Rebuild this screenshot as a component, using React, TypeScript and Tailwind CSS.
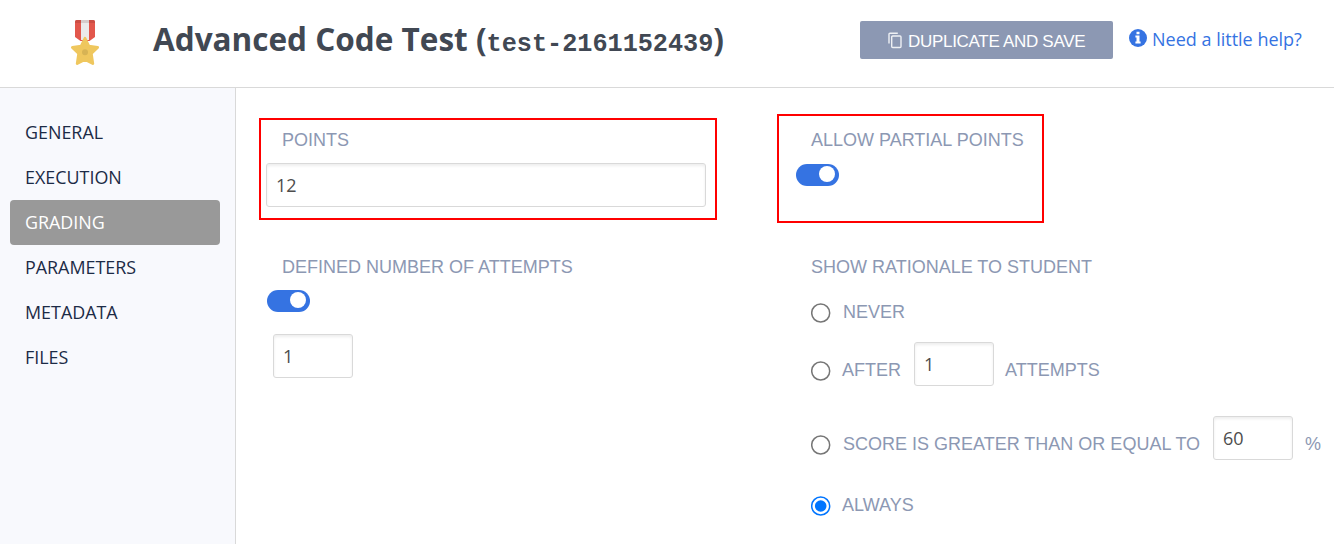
import type { ReactNode } from "react";

const label = "whitespace-nowrap font-['Liberation_Sans',sans-serif] text-[18px] leading-[22px] text-[#8c98b3]";
const field =
  "block h-[44px] shrink-0 rounded-[3px] border border-[#d9d9d9] bg-white px-[9px] pb-[1px] font-['Open_Sans',sans-serif] text-[18px] text-[#4d4d4d] shadow-[inset_0_2px_3px_rgba(0,0,0,0.07)] outline-none";

function Medal() {
  return (
    <svg width="28" height="46" viewBox="0 0 28 46" className="block shrink-0">
      <path d="M4 2Q4 0 6 0H22Q24 0 24 2V17L18.5 21H9.5L4 17Z" fill="#e2574c" />
      <path d="M6 0h4v3H4V2Q4 0 6 0ZM18 0h4q2 0 2 2v1h-6Z" fill="#cb4e44" />
      <path d="M10 0h8v20h-8Z" fill="#ebebeb" />
      <path d="M10 0h8v3h-8Z" fill="#d6cccb" />
      <path
        d="M14 18.3 17.8 26.2 26.6 27.4 20.3 33.4 21.8 43.6 14 39.5 6.2 43.6 7.7 33.4 1.4 27.4 10.2 26.2Z"
        fill="#efc75e"
        stroke="#efc75e"
        strokeWidth="2.8"
        strokeLinejoin="round"
      />
      <circle cx="14" cy="32.3" r="3" fill="#d7b354" />
    </svg>
  );
}

function CopyIcon() {
  return (
    <svg width="14" height="17" viewBox="0 0 14 17" fill="none" stroke="#fff" strokeOpacity="0.85" strokeWidth="1.4" className="-mt-[2px] block shrink-0">
      <path d="M1 11.5V2Q1 1.2 2 1.2H9.8" />
      <rect x="3.7" y="4" width="9.3" height="11.5" rx="1" />
    </svg>
  );
}

function InfoIcon() {
  return (
    <svg width="18" height="18" viewBox="0 0 18 18" className="block shrink-0">
      <circle cx="9" cy="9" r="9" fill="#3573e2" />
      <path d="M7.5 2.7h3v2.5h-3ZM6.4 6.5h4.1v6h1.1v1.9H6.4v-1.9h1.1V8.4H6.4Z" fill="#fff" />
    </svg>
  );
}

function Toggle() {
  return (
    <button role="switch" aria-checked="true" className="flex h-[22px] w-[43px] shrink-0 items-start justify-end rounded-full bg-[#3573e2] pt-[2px] pr-[4px]">
      <span className="block size-[16px] rounded-full bg-white" />
    </button>
  );
}

function Radio({ checked = false }: { checked?: boolean }) {
  return (
    <svg width="20" height="20" viewBox="0 0 20 20" className="mt-[1px] block shrink-0">
      <circle cx="9.7" cy="10" r="9" fill="#fff" stroke={checked ? "#0075ff" : "#767676"} strokeWidth="1.5" />
      {checked && <circle cx="9.7" cy="10" r="5.8" fill="#0075ff" />}
    </svg>
  );
}

function Option({ checked, className, children }: { checked?: boolean; className: string; children: ReactNode }) {
  return (
    <div className={`flex items-center ${className}`}>
      <Radio checked={checked} />
      {children}
    </div>
  );
}

const items = ["GENERAL", "EXECUTION", "GRADING", "PARAMETERS", "METADATA", "FILES"];

export default function App() {
  return (
    <div className="flex h-[544px] w-[1334px] flex-col overflow-hidden bg-white font-['Open_Sans',sans-serif]">
      <header className="flex h-[88px] shrink-0 items-start border-b border-[#d9d9d9] pl-[71px]">
        <div className="mt-[20px]">
          <Medal />
        </div>
        <h1 className="mt-[17px] ml-[54px] w-[707px] whitespace-nowrap text-[31.5px] leading-[44px] font-bold text-[#414853]">
          Advanced Code Test (
          <span className="font-['Liberation_Mono',monospace] text-[25.2px] leading-[1px]">test-2161152439</span>)
        </h1>
        <button className="mt-[21px] flex h-[38px] w-[253px] shrink-0 items-center rounded-[2px] bg-[#8c98b3] pt-[3px] pl-[28px]">
          <CopyIcon />
          <span className="ml-[6px] whitespace-nowrap font-['Liberation_Sans',sans-serif] text-[17px] leading-[20px] tracking-[-0.3px] text-white">DUPLICATE AND SAVE</span>
        </button>
        <a className="mt-[27px] ml-[16px] flex items-start text-[#3573e2]">
          <span className="mt-[2px]">
            <InfoIcon />
          </span>
          <span className="ml-[5px] whitespace-nowrap text-[18px] leading-[24px]">Need a little help?</span>
        </a>
      </header>
      <div className="flex min-h-0 flex-1">
        <nav className="flex w-[236px] shrink-0 flex-col border-r border-[#d9d9d9] bg-[#f8f9fd] px-[10px] pt-[22px]">
          {items.map((t) => (
            <a
              key={t}
              className={`flex h-[45px] w-[210px] items-center rounded-[4px] px-[15px] pb-[1px] text-[17.9px] leading-[24px] ${t === "GRADING" ? "bg-[#999] text-white" : "text-[#1c2b46]"}`}
            >
              {t}
            </a>
          ))}
        </nav>
        <main className="flex flex-1 items-start">
          <section className="ml-[23px] flex w-[458px] shrink-0 flex-col pt-[30px]">
            <div className="flex h-[102px] w-[458px] flex-col border-2 border-[#f00] pt-[9px] pl-[5px]">
              <span className={`${label} ml-[16px]`}>POINTS</span>
              <input className={`${field} mt-[12px] w-[440px]`} defaultValue="12" />
            </div>
            <span className={`${label} mt-[36px] ml-[23px]`}>DEFINED NUMBER OF ATTEMPTS</span>
            <div className="mt-[12px] ml-[8px] flex">
              <Toggle />
            </div>
            <input className={`${field} mt-[22px] ml-[14px] w-[80px]`} defaultValue="1" />
          </section>
          <section className="ml-[60px] flex flex-1 flex-col pt-[26px]">
            <div className="flex h-[109px] w-[267px] flex-col border-2 border-[#f00] pt-[13px] pl-[17px]">
              <span className={`${label} ml-[15px]`}>ALLOW PARTIAL POINTS</span>
              <div className="mt-[13px] flex">
                <Toggle />
              </div>
            </div>
            <span className={`${label} mt-[33px] ml-[34px]`}>SHOW RATIONALE TO STUDENT</span>
            <div className="ml-[34px] flex flex-col">
              <Option className="mt-[23px] h-[22px]">
                <span className={`${label} ml-[12px]`}>NEVER</span>
              </Option>
              <Option className="mt-[25px] h-[44px]">
                <span className={`${label} ml-[11px]`}>AFTER</span>
                <input className={`${field} ml-[13px] w-[80px] -translate-y-[6px]`} defaultValue="1" />
                <span className={`${label} ml-[11px]`}>ATTEMPTS</span>
              </Option>
              <Option className="mt-[30px] h-[44px]">
                <span className={`${label} ml-[12px]`}>SCORE IS GREATER THAN OR EQUAL TO</span>
                <input className={`${field} ml-[13px] w-[80px] -translate-y-[6px]`} defaultValue="60" />
                <span className={`${label} ml-[12px]`}>%</span>
              </Option>
              <Option checked className="mt-[28px] h-[22px]">
                <span className={`${label} ml-[11px]`}>ALWAYS</span>
              </Option>
            </div>
          </section>
        </main>
      </div>
    </div>
  );
}
